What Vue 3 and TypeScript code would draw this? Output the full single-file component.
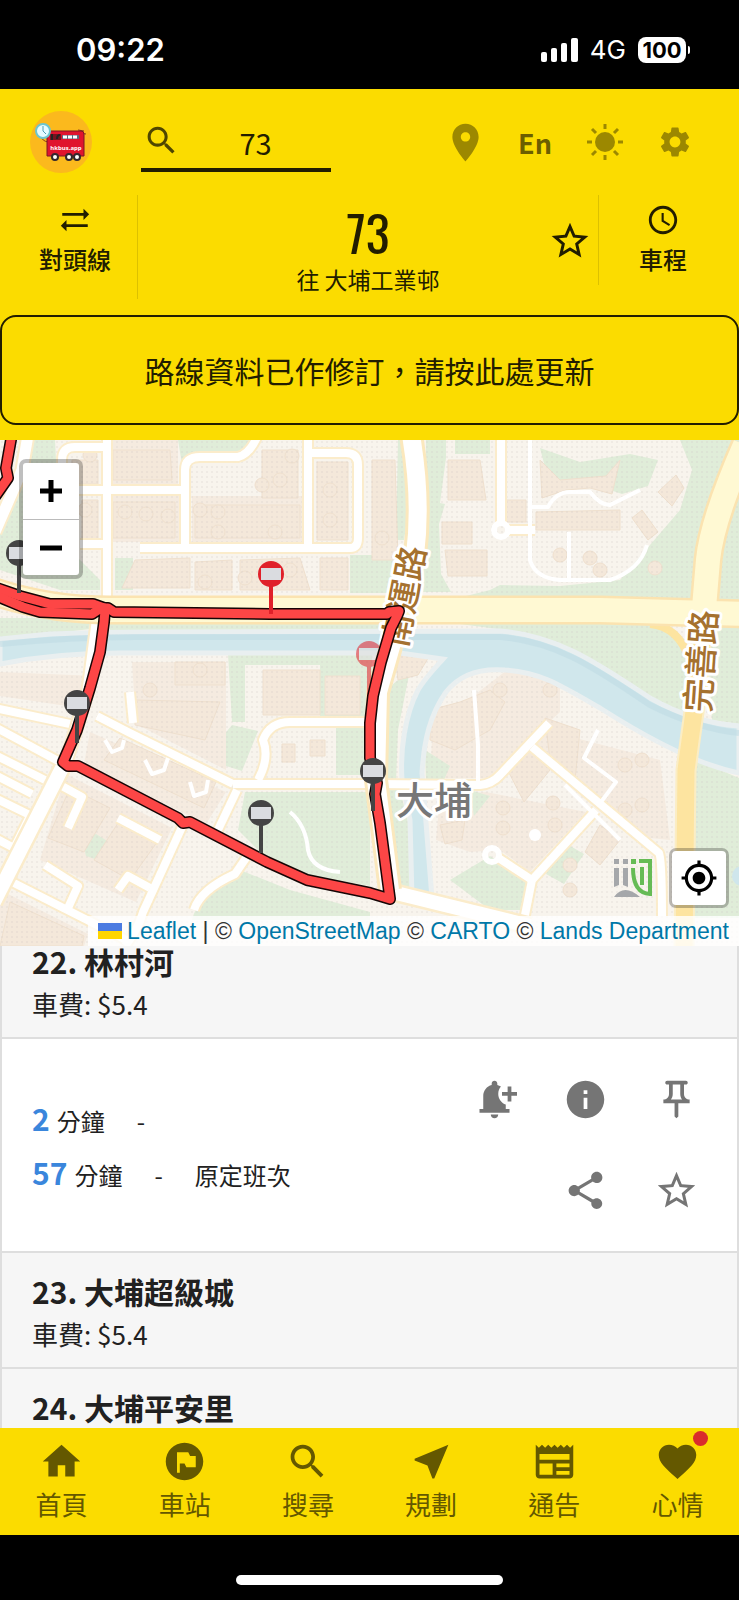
<script setup lang="ts">
import { onMounted, ref } from 'vue'

interface NavItem {
  label: string
  icon: string
  badge?: boolean
}

interface Pin {
  x: number
  y: number
  color: string
}

const icons = {
  search:
    'M15.5 14h-.79l-.28-.27C15.41 12.59 16 11.11 16 9.5 16 5.91 13.09 3 9.5 3S3 5.91 3 9.5 5.91 16 9.5 16c1.61 0 3.09-.59 4.23-1.57l.27.28v.79l5 4.99L20.49 19l-4.99-5zm-6 0C7.01 14 5 11.99 5 9.5S7.01 5 9.5 5 14 7.01 14 9.5 11.99 14 9.5 14z',
  place:
    'M12 2C8.13 2 5 5.13 5 9c0 5.25 7 13 7 13s7-7.75 7-13c0-3.87-3.13-7-7-7zm0 9.5c-1.38 0-2.5-1.12-2.5-2.5s1.12-2.5 2.5-2.5 2.5 1.12 2.5 2.5-1.12 2.5-2.5 2.5z',
  settings:
    'M19.14 12.94c.04-.3.06-.61.06-.94 0-.32-.02-.64-.07-.94l2.03-1.58c.18-.14.23-.41.12-.61l-1.92-3.32c-.12-.22-.37-.29-.59-.22l-2.39.96c-.5-.38-1.03-.7-1.62-.94l-.36-2.54c-.04-.24-.24-.41-.48-.41h-3.84c-.24 0-.43.17-.47.41l-.36 2.54c-.59.24-1.13.57-1.62.94l-2.39-.96c-.22-.08-.47 0-.59.22L2.74 8.87c-.12.21-.08.47.12.61l2.03 1.58c-.05.3-.09.63-.09.94s.02.64.07.94l-2.03 1.58c-.18.14-.23.41-.12.61l1.92 3.32c.12.22.37.29.59.22l2.39-.96c.5.38 1.03.7 1.62.94l.36 2.54c.05.24.24.41.48.41h3.84c.24 0 .44-.17.47-.41l.36-2.54c.59-.24 1.13-.56 1.62-.94l2.39.96c.22.08.47 0 .59-.22l1.92-3.32c.12-.22.07-.47-.12-.61l-2.01-1.58zM12 15.6c-1.98 0-3.6-1.62-3.6-3.6s1.62-3.6 3.6-3.6 3.6 1.62 3.6 3.6-1.62 3.6-3.6 3.6z',
  swap: 'M22 8l-4-4v3H3v2h15v3l4-4zM2 16l4 4v-3h15v-2H6v-3l-4 4z',
  clock:
    'M11.99 2C6.47 2 2 6.48 2 12s4.47 10 9.99 10C17.52 22 22 17.52 22 12S17.52 2 11.99 2zM12 20c-4.42 0-8-3.58-8-8s3.58-8 8-8 8 3.58 8 8-3.58 8-8 8zm.5-13H11v6l5.25 3.15.75-1.23-4.5-2.67z',
  star:
    'M22 9.24l-7.19-.62L12 2 9.19 8.63 2 9.24l5.46 4.73L5.82 21 12 17.27 18.18 21l-1.63-7.03L22 9.24zM12 15.4l-3.76 2.27 1-4.28-3.32-2.88 4.38-.38L12 6.1l1.71 4.04 4.38.38-3.32 2.88 1 4.28L12 15.4z',
  locate:
    'M12 8c-2.21 0-4 1.79-4 4s1.79 4 4 4 4-1.79 4-4-1.79-4-4-4zm8.94 3c-.46-4.17-3.77-7.48-7.94-7.94V1h-2v2.06C6.83 3.52 3.52 6.83 3.06 11H1v2h2.06c.46 4.17 3.77 7.48 7.94 7.94V23h2v-2.06c4.17-.46 7.48-3.77 7.94-7.94H23v-2h-2.06zM12 19c-3.87 0-7-3.13-7-7s3.13-7 7-7 7 3.13 7 7-3.13 7-7 7z',
  bell:
    'M10 20h4c0 1.1-.9 2-2 2s-2-.9-2-2zm4-11c0 2.61 1.67 4.83 4 5.66V17h2v2H4v-2h2v-7c0-2.79 1.91-5.14 4.5-5.8v-.7c0-.83.67-1.5 1.5-1.5s1.5.67 1.5 1.5v.7c.71.18 1.36.49 1.95.9C14.54 6.14 14 7.51 14 9zm10-1h-3V5h-2v3h-3v2h3v3h2v-3h3V8z',
  info: 'M12 2C6.48 2 2 6.48 2 12s4.48 10 10 10 10-4.48 10-10S17.52 2 12 2zm1 15h-2v-6h2v6zm0-8h-2V7h2v2z',
  pin:
    'M14 4v5c0 1.12.37 2.16 1 3H9c.65-.86 1-1.9 1-3V4h4m3-2H7c-.55 0-1 .45-1 1s.45 1 1 1h1v5c0 1.66-1.34 3-3 3v2h5.97v7l1 1 1-1v-7H19v-2c-1.66 0-3-1.34-3-3V4h1c.55 0 1-.45 1-1s-.45-1-1-1z',
  share:
    'M18 16.08c-.76 0-1.44.3-1.96.77L8.91 12.7c.05-.23.09-.46.09-.7s-.04-.47-.09-.7l7.05-4.11c.54.5 1.25.81 2.04.81 1.66 0 3-1.34 3-3s-1.34-3-3-3-3 1.34-3 3c0 .24.04.47.09.7L8.04 9.81C7.5 9.31 6.79 9 6 9c-1.66 0-3 1.34-3 3s1.34 3 3 3c.79 0 1.5-.31 2.04-.81l7.12 4.16c-.05.21-.08.43-.08.65 0 1.61 1.31 2.92 2.92 2.92s2.92-1.31 2.92-2.92-1.31-2.92-2.92-2.92z',
  home: 'M10 20v-6h4v6h5v-8h3L12 3 2 12h3v8z',
  flag: 'M12 2C6.48 2 2 6.48 2 12s4.48 10 10 10 10-4.48 10-10S17.52 2 12 2zm6 13h-5l-1-2H9.5v5H8V7h6l1 2h3v6z',
  near: 'M21 3L3 10.53v.98l6.84 2.65L12.48 21h.98L21 3z',
  news:
    'M22 3l-1.67 1.67L18.67 3 17 4.67 15.33 3l-1.66 1.67L12 3l-1.67 1.67L8.67 3 7 4.67 5.33 3 3.67 4.67 2 3v16c0 1.1.9 2 2 2h16c1.1 0 2-.9 2-2V3zM11 19H4v-6h7v6zm9 0h-7v-2h7v2zm0-4h-7v-2h7v2zm0-4H4V8h16v3z',
  heart:
    'M12 21.35l-1.45-1.32C5.4 15.36 2 12.28 2 8.5 2 5.42 4.42 3 7.5 3c1.74 0 3.41.81 4.5 2.09C13.09 3.81 14.76 3 16.5 3 19.58 3 22 5.42 22 8.5c0 3.78-3.4 6.86-8.55 11.54L12 21.35z',
}

const query = ref('73')

const nav: NavItem[] = [
  { label: '首頁', icon: icons.home },
  { label: '車站', icon: icons.flag },
  { label: '搜尋', icon: icons.search },
  { label: '規劃', icon: icons.near },
  { label: '通告', icon: icons.news },
  { label: '心情', icon: icons.heart, badge: true },
]

const actions = [
  { label: '到站提示', icon: icons.bell },
  { label: '車站資料', icon: icons.info },
  { label: '置頂', icon: icons.pin },
]
const moreActions = [
  { label: '分享', icon: icons.share },
  { label: '收藏', icon: icons.star },
]

const arrivals = [
  { minutes: 2, remark: '' },
  { minutes: 57, remark: '原定班次' },
]

const pins: Pin[] = [
  { x: 19, y: 113, color: '#444' },
  { x: 271, y: 134, color: '#e0202a' },
  { x: 77, y: 263, color: '#444' },
  { x: 373, y: 331, color: '#444' },
  { x: 261, y: 373, color: '#444' },
]

const routeLines = [
  'M12 -6 L6 28 L8 38 L-6 58',
  'M-6 147 L20 156 L50 164 L93 164 L107 169',
  'M-6 155 L23 167 L40 172 L92 174 L101 168 L108 168 L114 172 L270 174 L387 174 L389 172 L399 171 L397 176 L391 188 L381 222 L373 256 L370 283 L370 318 L377 343 L375 354 L380 383 L390 459 L370 453 L307 440 L267 422 L190 382 L183 383 L178 378 L78 326 L68 326 L63 322 L77 290 L90 248 L100 212 L104 182 L105 170',
]

const roadsMinor = [
  'M62 40 V20 Q62 7 75 7 H104',
  'M75 50 H185',
  'M107 -5 V165',
  'M185 108 V30 Q185 17 200 17 H238 Q250 14 258 -5',
  'M140 108 H350 Q358 108 358 98 V25 Q358 13 346 13 H308',
  'M308 -5 V108',
  'M80 104 H105',
  'M501 -5 V86 M505 90 H535',
  'M-5 268 L70 284 M97 276 L128 292 L233 344',
  'M233 344 H375 L480 345 Q492 344 500 335 L549 283',
  'M-5 287 L60 322',
  'M-5 315 L45 340 M-5 335 L32 354',
  'M182 387 L143 472 Q138 490 125 506',
  'M8 440 L97 485 L130 502',
  'M237 350 L217 392',
  'M130 252 L133 283',
  'M258 340 Q270 318 263 300 Q270 282 290 282 H370',
  'M532 307 L659 413 Q662 418 662 476',
  'M596 370 L532 440 L524 480',
  'M532 440 L497 417',
  'M-5 358 L40 380 M-5 398 L14 408 L32 372',
  'M60 345 L82 357 L68 388 M118 378 L160 400',
  'M45 425 L78 446 L68 468 M118 450 L128 436 L150 448',
  'M194 470 Q200 450 235 434 L246 418',
]
const paths = [
  'M530 -5 V120 Q535 138 560 140 H610 Q640 130 647 105',
  'M530 67 H548 Q556 52 570 52 H590 Q600 65 610 65 L640 50',
  'M569 92 V138',
  'M290 372 Q306 385 308 410 Q312 430 340 432',
  'M478 345 V305 L474 250 M565 345 L620 400',
  'M598 290 L584 318 L616 342 L598 366',
  'M105 300 L112 312 L122 308 L124 300 M145 320 L152 334 L164 330 L168 318 M190 342 L194 356 L206 352 L208 340',
]

const estates = [
  '112,0 178,0 178,44 112,44',
  '192,56 302,56 302,102 192,102',
  '112,56 180,56 180,102 112,102',
  '90,292 226,352 206,384 84,324',
  '66,334 172,388 136,462 40,420',
  '0,450 88,494 84,506 0,506',
  '0,232 96,236 80,268 0,256',
  '132,222 226,222 226,330 136,284',
  '455,270 520,220 560,245 560,272 490,338 430,338 432,300',
  '545,290 660,320 670,400 650,398 536,306',
  '440,355 486,352 586,372 530,432 500,410 470,412 436,400',
]

const blocks = [
  '113,10 170,10 172,40 113,40',
  '113,62 175,62 175,98 113,98',
  '195,65 300,65 300,98 195,98',
  '262,10 298,10 298,58 262,58',
  '317,22 348,22 348,100 317,100',
  '72,20 98,20 98,44 72,44',
  '82,60 98,60 98,100 82,100',
  '135,120 190,118 190,148 122,148',
  '195,122 232,120 232,150 195,150',
  '240,120 300,118 310,150 240,150',
  '320,118 348,118 348,150 320,150',
  '372,20 395,20 398,120 372,120',
  '448,20 480,20 486,60 448,60',
  '442,82 472,82 472,104 442,104',
  '445,110 487,110 487,136 448,136',
  '506,60 526,60 526,82 506,82',
  '536,72 620,70 620,90 536,90',
  '540,20 560,40 606,36 620,20 612,54 590,48 566,50 542,58',
  '632,78 642,70 658,92 648,100',
  '658,52 676,35 684,48 672,66',
  '175,222 225,222 225,245 175,245',
  '263,230 320,230 320,275 263,275',
  '325,236 360,236 360,275 325,275',
  '135,260 220,262 205,300 135,285',
  '120,298 216,342 204,368 104,320',
  '70,348 110,368 84,412 48,398',
  '120,380 160,398 130,440 94,420',
  '10,462 84,496 82,506 0,506',
  '282,304 295,304 295,322 282,322',
  '310,300 325,300 325,316 310,316',
  '505,325 530,312 550,330 524,362',
  '545,278 580,290 575,340 550,320',
  '585,412 600,385 620,400 600,425',
  '430,270 460,262 490,250 505,262 490,290 455,310 430,300',
  '395,215 430,215 418,235 398,240',
  '440,385 465,380 462,400 445,404',
]

const towers: [number, number][] = [
  [125, 72], [146, 74], [168, 76], [200, 70], [218, 72], [218, 92], [275, 92], [292, 16],
  [262, 45], [330, 80], [330, 50], [382, 98], [200, 230], [205, 142], [245, 138], [290, 130],
  [503, 368], [503, 388], [553, 363], [555, 385], [625, 370], [642, 365], [625, 325], [642, 320],
  [90, 15], [85, 70], [150, 250], [280, 40], [560, 115], [590, 118], [600, 130], [655, 128],
  [570, 425], [570, 450], [550, 250], [500, 250],
]

const list = ref<HTMLElement | null>(null)
onMounted(() => {
  if (list.value) list.value.scrollTop = 23
})
</script>

<template>
  <div class="phone">
    <div class="status">
      <span class="time">09:22</span>
      <div class="signal-group">
        <svg class="bars" viewBox="0 0 37 24" aria-hidden="true">
          <rect x="0" y="14" width="6" height="10" rx="2" />
          <rect x="10" y="10" width="6" height="14" rx="2" />
          <rect x="20" y="5" width="6" height="19" rx="2" />
          <rect x="30" y="0" width="7" height="24" rx="2" />
        </svg>
        <span class="net">4G</span>
        <span class="battery">100</span>
      </div>
    </div>

    <header class="header">
      <div class="toolbar">
        <a class="logo" href="#" aria-label="hkbus.app">
          <svg viewBox="0 0 62 62">
            <circle cx="31" cy="31" r="31" fill="#fbb91d" />
            <path d="M11 25q1 5 7 6" fill="none" stroke="#8a3b1c" stroke-width="1" />
            <path d="M48 19l6 1M50 22l6 1" stroke="#8a3b1c" stroke-width="1" />
            <path d="M21 20h30q3 0 3 3v22H17V24q0-4 4-4z" fill="#e0142e" stroke="#7a1626" stroke-width="1" />
            <rect x="20" y="23" width="11" height="6" fill="#75131f" />
            <path d="M22 23v6M27 28q0-4 3-4" stroke="#222" stroke-width="2" fill="none" />
            <rect x="32" y="24" width="17" height="4" fill="#5d6b80" />
            <path d="M33 26h4M38 26h4M43 26h4" stroke="#fff" stroke-width="3" />
            <text x="36" y="39" text-anchor="middle" class="logo-text">hkbus.app</text>
            <g fill="#fff" stroke="#33272e" stroke-width="2">
              <circle cx="25" cy="46" r="3" />
              <circle cx="39" cy="46" r="3" />
              <circle cx="47" cy="46" r="3" />
            </g>
            <circle cx="13" cy="20" r="7" fill="#e6fbff" stroke="#6cc5cf" stroke-width="2" />
            <path d="M13 15v5l3 3" fill="none" stroke="#4f9fb5" stroke-width="1" />
          </svg>
        </a>
        <label class="search">
          <svg class="i37" viewBox="0 0 24 24"><path :d="icons.search" /></svg>
          <input v-model="query" type="text" aria-label="路線" />
        </label>
        <div class="tools">
          <button type="button" aria-label="定位" class="tool dim">
            <svg class="i45" viewBox="0 0 24 24"><path :d="icons.place" /></svg>
          </button>
          <button type="button" class="tool lang">En</button>
          <button type="button" aria-label="外觀" class="tool dim">
            <svg class="i36" viewBox="0 0 36 36">
              <circle cx="18" cy="18" r="10" />
              <g stroke="currentColor" stroke-width="3">
                <path d="M18 0v5M18 31v5M0 18h5M31 18h5M5 5l4 4M27 27l4 4M5 31l4-4M27 9l4-4" />
              </g>
            </svg>
          </button>
          <button type="button" aria-label="設定" class="tool dim">
            <svg class="i36" viewBox="0 0 24 24"><path :d="icons.settings" /></svg>
          </button>
        </div>
      </div>

      <div class="route">
        <button type="button" class="side">
          <svg class="i34" viewBox="0 0 24 24"><path :d="icons.swap" /></svg>
          <span>對頭線</span>
        </button>
        <div class="route-main">
          <div class="route-title">
            <h1>73</h1>
            <p>往 大埔工業邨</p>
          </div>
          <button type="button" class="fav" aria-label="收藏路線">
            <svg class="i44" viewBox="0 0 24 24"><path :d="icons.star" /></svg>
          </button>
        </div>
        <button type="button" class="side right">
          <svg class="i34" viewBox="0 0 24 24"><path :d="icons.clock" /></svg>
          <span>車程</span>
        </button>
      </div>

      <button type="button" class="notice">路線資料已作修訂，請按此處更新</button>
    </header>

    <section class="map" aria-label="地圖">
      <svg class="tiles" viewBox="0 0 739 506" preserveAspectRatio="xMidYMid slice">
        <defs>
          <pattern id="speck" width="5" height="5" patternUnits="userSpaceOnUse">
            <circle cx="2" cy="2" r="1" fill="#cfc8c4" opacity=".3" />
          </pattern>
        </defs>
        <rect width="739" height="506" fill="#f8f4ed" />

        <g class="green">
          <path d="M0 75 L22 30 L30 0 L55 0 L60 100 L100 140 L100 150 L60 150 L0 130z" />
          <path d="M178 0H256L240 14H200L182 24z" />
          <path d="M246 78h22v22h-22z" />
          <path d="M350 115h55v38h-55zM115 118h18v32h-18z" />
          <path d="M398 0l8 0 4 60-6 40-8 0zM426 0h20v18l-6 45-14 20zM455 0h35v14h-35z" />
          <path d="M425 60l20 4-6 20 2 50 10 18h-28z" />
          <path d="M500 145 L560 146 L620 140 L650 105 L680 70 L692 30 L680 0 H739 V160 H450 L490 150z" />
          <path d="M540 8l40 14 50-8 28 6-10 26-26 8-30-10-40 10z" />
          <path d="M460 184H660L686 200V275L650 258L590 222L520 192z" />
          <path d="M706 184H739V284L712 280z" />
          <path d="M0 178H98V188L0 200z" />
          <path d="M110 180H385V190H110z" />
          <path d="M228 214H372V282H320V225H245V282H232z" />
          <path d="M232 285l26 6-16 40-38-12z" />
          <path d="M245 352H370V446L310 436L260 412L238 390z" />
          <path d="M336 284H370V335H336z" />
          <path d="M240 430l50 20 80 22v8H192q4-22 48-50z" />
          <path d="M386 250l24-20-12 60-2 52h-10zM386 350h14l10 40v60l-14-6z" />
          <path d="M692 318l47 20v140h-47z" />
          <path d="M450 440l40-24 38 24-8 30-30 0z" />
        </g>
        <g class="estate"><polygon v-for="e in estates" :key="e" :points="e" /></g>
        <g class="green">
          <path d="M82 398l14-4 16 10-8 18-18-6z" />
          <path d="M425 310l25 16-6 14-18 0zM470 350l20 6-16 20zM560 400l24 14-20 30-18-10z" />
        </g>

        <g class="block">
          <polygon v-for="b in blocks" :key="b" :points="b" />
          <circle v-for="(t, i) in towers" :key="i" :cx="t[0]" :cy="t[1]" r="7" />
        </g>
        <rect width="739" height="506" fill="url(#speck)" />

        <path
          class="water"
          d="M0 199 L50 194 Q100 192 150 192 L500 191 C560 196 600 225 650 258 C680 275 710 284 739 286 V333 C700 325 650 300 600 268 C560 245 540 232 505 230 C480 228 460 234 446 252 C430 275 424 300 422 333 L425 370 L432 458 H412 L410 380 L402 340 C400 310 405 275 418 250 C425 238 435 228 443 219 L400 213 H130 Q60 212 0 224z"
        />
        <path
          class="water-deep"
          d="M0 204 Q80 196 150 197 H500 C560 202 600 232 650 265 C680 280 710 290 739 293"
        />
        <circle cx="742" cy="436" r="10" fill="#cfe6ec" />

        <g class="lines">
          <path v-for="r in roadsMinor" :key="'c' + r" :d="r" class="casing" />
          <path v-for="p in paths" :key="p" :d="p" class="footway" />
          <path v-for="r in roadsMinor" :key="'r' + r" :d="r" class="road" />
          <path class="casing wide" d="M62 328 L-6 462" />
          <path class="road wide" d="M62 328 L-6 462" />
          <path class="casing wide" d="M392 452 L530 486" />
          <path class="road wide" d="M392 452 L530 486" />
          <path class="casing side-way" d="M28 -5 L22 30 L-5 92 M98 176 L88 250 L66 322" />
          <path class="road side-way" d="M28 -5 L22 30 L-5 92 M98 176 L88 250 L66 322" />
          <circle cx="501" cy="90" r="7" class="road-ring" />
          <circle cx="492" cy="415" r="7" class="road-ring" />
          <circle cx="535" cy="395" r="6" class="spot" />
          <path class="arterial-case" d="M411 -5 Q422 60 415 115 L400 175 L378 252 L376 340 L390 450" />
          <path class="arterial" d="M411 -5 Q422 60 415 115 L400 175 L378 252 L376 340 L390 450" />
          <path class="orange-thin" d="M650 184 Q678 186 690 220" />
          <path class="trunk-case" d="M-5 152 Q50 170 110 170 H600 L745 174 M745 5 Q712 80 708 120 L703 180" />
          <path class="orange-case" d="M703 182 L697 250 L686 330 L684 510" />
          <path class="trunk" d="M-5 152 Q50 170 110 170 H600 L745 174 M745 5 Q712 80 708 120 L703 180" />
          <path class="orange" d="M703 190 L697 250 L686 330 L684 510" />
        </g>

        <g class="map-label">
          <text x="434" y="374" class="town">大埔</text>
          <text transform="translate(402 156) rotate(-79)" class="street">南運路</text>
          <text transform="translate(699 221) rotate(-86)" class="street">完善路</text>
        </g>

        <g opacity=".55">
          <path d="M369 214V256" stroke="#e0202a" stroke-width="4" />
          <circle cx="369" cy="214" r="13" fill="#e0202a" />
          <rect x="359" y="208" width="20" height="12" fill="#ddd" />
        </g>
        <g class="line-edge"><path v-for="l in routeLines" :key="l" :d="l" /></g>
        <g class="line-fill"><path v-for="l in routeLines" :key="l" :d="l" /></g>
        <g v-for="p in pins" :key="p.x">
          <path :d="`M${p.x} ${p.y}v40`" :stroke="p.color" stroke-width="4" />
          <circle :cx="p.x" :cy="p.y" r="13" :fill="p.color" />
          <rect :x="p.x - 10" :y="p.y - 6" width="20" height="12" fill="#dadce0" />
        </g>
      </svg>

      <div class="zoom">
        <button type="button" aria-label="放大">
          <svg viewBox="0 0 24 24"><path d="M1 12h22M12 1v22" /></svg>
        </button>
        <button type="button" aria-label="縮小">
          <svg viewBox="0 0 24 24"><path d="M1 12h22" /></svg>
        </button>
      </div>

      <div class="map-tools">
        <svg class="lands" viewBox="0 0 38 38" aria-hidden="true">
          <path d="M0 0h5v5H0zM9 0h5v5H9zM0 9h5v17l-5 2zM9 9h5v19l-5-2zM0 38q10-14 26 0z" fill="#a5a7aa" />
          <path d="M17 0h5v5h-5z" fill="#66bb55" />
          <path d="M25 2h11v33Q19 34 19 9" fill="none" stroke="#66bb55" stroke-width="4" />
          <path d="M28 8v18" fill="none" stroke="#66bb55" stroke-width="4" />
        </svg>
        <button type="button" class="locate" aria-label="我的位置">
          <svg viewBox="0 0 24 24"><path :d="icons.locate" /></svg>
        </button>
      </div>

      <div class="attribution">
        <svg class="ua" viewBox="0 0 24 16" aria-hidden="true">
          <path fill="#4c7be1" d="M0 0h24v8H0z" />
          <path fill="#ffd500" d="M0 8h24v8H0z" />
        </svg>
        <a href="#">Leaflet</a> | © <a href="#">OpenStreetMap</a> © <a href="#">CARTO</a> ©
        <a href="#">Lands Department</a>
      </div>
    </section>

    <main ref="list" class="stops">
      <section class="stop">
        <h2>22. 林村河</h2>
        <p>車費: $5.4</p>
      </section>
      <section class="detail">
        <ul class="eta">
          <li v-for="a in arrivals" :key="a.minutes">
            <b>{{ a.minutes }}</b>
            <span>分鐘</span>
            <span class="dash">-</span>
            <span>{{ a.remark }}</span>
          </li>
        </ul>
        <div class="actions">
          <div class="action-row">
            <button v-for="a in actions" :key="a.label" type="button" :aria-label="a.label">
              <svg class="i45" viewBox="0 0 24 24"><path :d="a.icon" /></svg>
            </button>
          </div>
          <div class="action-row">
            <button v-for="a in moreActions" :key="a.label" type="button" :aria-label="a.label">
              <svg class="i45" viewBox="0 0 24 24"><path :d="a.icon" /></svg>
            </button>
          </div>
        </div>
      </section>
      <section class="stop">
        <h2>23. 大埔超級城</h2>
        <p>車費: $5.4</p>
      </section>
      <section class="stop">
        <h2>24. 大埔平安里</h2>
        <p>車費: $5.4</p>
      </section>
    </main>

    <nav class="bottom">
      <a v-for="n in nav" :key="n.label" href="#">
        <span class="nav-icon">
          <svg class="i45" viewBox="0 0 24 24"><path :d="n.icon" /></svg>
          <i v-if="n.badge" class="badge"></i>
        </span>
        <span>{{ n.label }}</span>
      </a>
    </nav>
    <div class="home-area"><div class="home-bar"></div></div>
  </div>
</template>

<style>
body {
  margin: 0;
  background: #000;
}
</style>

<style scoped>
.phone {
  display: flex;
  flex-direction: column;
  height: 100vh;
  font-family: 'Noto Sans CJK TC', 'Noto Sans', sans-serif;
  color: #212121;
  background: #000;
}
* {
  box-sizing: border-box;
}
button {
  margin: 0;
  padding: 0;
  border: 0;
  background: none;
  color: inherit;
  font: inherit;
  display: flex;
  align-items: center;
  justify-content: center;
}
a {
  text-decoration: none;
}
svg {
  display: block;
  fill: currentColor;
}
.i34 { width: 34px; height: 34px; }
.i36 { width: 36px; height: 36px; }
.i37 { width: 37px; height: 37px; }
.i44 { width: 44px; height: 44px; }
.i45 { width: 45px; height: 45px; }

.status {
  flex: none;
  display: flex;
  align-items: center;
  justify-content: space-between;
  height: 89px;
  padding: 10px 50px 0 76px;
  color: #fff;
  font-family: Inter, sans-serif;
}
.time {
  font-size: 31px;
  font-weight: 600;
}
.signal-group {
  display: flex;
  align-items: center;
  gap: 12px;
}
.bars {
  width: 37px;
  height: 24px;
}
.net {
  font-size: 26px;
}
.battery {
  position: relative;
  width: 48px;
  height: 26px;
  margin-right: 3px;
  border-radius: 8px;
  background: #fff;
  color: #000;
  font-size: 22px;
  font-weight: 700;
  line-height: 26px;
  text-align: center;
}
.battery::after {
  content: '';
  position: absolute;
  left: 50px;
  top: 9px;
  width: 2px;
  height: 8px;
  border-radius: 0 2px 2px 0;
  background: #fff;
}

.header {
  flex: none;
  background: #fbdc00;
  color: #221d00;
  padding-bottom: 15px;
}
.toolbar {
  display: flex;
  align-items: center;
  height: 106px;
  padding: 0 29px 0 30px;
}
.logo {
  width: 62px;
}
.logo-text {
  font: 700 6px 'Open Sans', sans-serif;
  fill: #fff;
}
.search {
  display: flex;
  align-items: center;
  width: 190px;
  height: 60px;
  margin-left: 49px;
  padding-left: 2px;
  border-bottom: 4px solid #221d00;
  color: #4f4600;
}
.search input {
  flex: 1;
  min-width: 0;
  height: 56px;
  padding: 4px 0 0;
  border: 0;
  outline: 0;
  background: none;
  color: #221d00;
  font: 29px 'Noto Sans CJK TC', sans-serif;
  text-align: center;
}
.tools {
  display: flex;
  flex: 1;
  justify-content: flex-end;
}
.tool {
  width: 70px;
  height: 60px;
}
.dim {
  color: #9c8800;
}
.lang {
  color: #6c5e00;
  font-size: 27px;
  font-weight: 700;
}

.route {
  display: grid;
  grid-template-columns: 137px 1fr 141px;
  align-items: start;
  height: 120px;
}
.side {
  flex-direction: column;
  justify-content: flex-start;
  gap: 6px;
  width: 100%;
  height: 90px;
  padding: 8px 0 0 13px;
  font-size: 24px;
  font-weight: 500;
  line-height: 32px;
}
.side.right {
  padding: 8px 12px 0 0;
  border-left: 1px solid #dcc100;
}
.route-main {
  display: grid;
  grid-template-columns: 1fr auto 1fr;
  height: 104px;
  border-left: 1px solid #dcc100;
}
.route-title {
  grid-column: 2;
  text-align: center;
}
.route-title h1 {
  margin: 6px 0 0;
  font-family: Oswald, 'Roboto Condensed', 'Liberation Sans Narrow', Roboto, sans-serif;
  font-size: 50px;
  font-weight: 400;
  line-height: 60px;
}
.route-title p {
  margin: 0;
  font-size: 23px;
  line-height: 36px;
}
.fav {
  justify-self: end;
  height: 92px;
  padding-right: 6px;
}
.notice {
  width: 100%;
  height: 110px;
  border: 2px solid #221d00;
  border-radius: 16px;
  font-size: 30px;
}

.map {
  flex: none;
  position: relative;
  height: 506px;
  overflow: hidden;
  background: #f8f3ec;
}
.tiles {
  width: 100%;
  height: 100%;
}
.green { fill: #e0edd9; }
.estate { fill: #f5ebe0; }
.block { fill: #f4e8da; stroke: #efe0ce; stroke-width: 1; }
.water { fill: #d0e7ec; stroke: #e9eff0; stroke-width: 5; }
.water-deep { fill: none; stroke: #bfdce4; stroke-width: 6; opacity: .6; }
.lines path, .lines circle { fill: none; stroke-linejoin: round; }
.lines .spot { fill: #fff; }
.casing { stroke: #fbeccb; stroke-width: 12; }
.road { stroke: #fff; stroke-width: 8; }
.road-ring { stroke: #fff; stroke-width: 6; }
.casing.wide { stroke-width: 19; }
.road.wide { stroke-width: 14; }
.casing.side-way { stroke-width: 15; }
.road.side-way { stroke-width: 11; }
.footway { stroke: #fff; stroke-width: 4; }
.arterial-case { stroke: #fbe8bd; stroke-width: 24; }
.arterial { stroke: #fff; stroke-width: 18; }
.trunk-case { stroke: #fbe3b0; stroke-width: 29; }
.trunk { stroke: #fff9d3; stroke-width: 24; }
.orange-case { stroke: #fbedc4; stroke-width: 21; }
.orange { stroke: #fde4a0; stroke-width: 17; }
.orange-thin { stroke: #fde4a0; stroke-width: 8; }
.map-label {
  font-family: 'Noto Sans CJK TC', sans-serif;
  text-anchor: middle;
  paint-order: stroke;
  stroke: #fff;
  stroke-width: 6;
  stroke-linejoin: round;
}
.town {
  fill: #777;
  font-size: 38px;
  font-weight: 500;
}
.street {
  fill: #a5712f;
  font-size: 34px;
  font-weight: 500;
  dominant-baseline: central;
}
.line-edge path, .line-fill path {
  fill: none;
  stroke-linejoin: round;
  stroke-linecap: round;
}
.line-edge path { stroke: #160505; stroke-width: 12; }
.line-fill path { stroke: #fd4646; stroke-width: 9; }

.zoom {
  position: absolute;
  left: 19px;
  top: 19px;
  border: 4px solid rgba(0, 0, 0, .25);
  border-radius: 7px;
  background: #fff;
  background-clip: padding-box;
}
.zoom button {
  width: 56px;
  height: 56px;
  color: #000;
}
.zoom button + button {
  border-top: 1px solid #bbb;
}
.zoom svg {
  width: 24px;
  height: 24px;
  stroke: #000;
  stroke-width: 5;
}
.map-tools {
  position: absolute;
  right: 10px;
  bottom: 38px;
  display: flex;
  align-items: center;
  gap: 17px;
}
.lands {
  width: 38px;
  height: 38px;
}
.locate {
  width: 60px;
  height: 60px;
  border: 3px solid rgba(0, 0, 0, .25);
  border-radius: 7px;
  background: #fff;
  background-clip: padding-box;
  color: #000;
}
.locate svg {
  width: 38px;
  height: 38px;
}
.attribution {
  position: absolute;
  right: 0;
  bottom: 0;
  height: 30px;
  padding: 0 10px;
  background: rgba(255, 255, 255, .8);
  color: #333;
  font: 23px/30px 'Liberation Sans', Arial, sans-serif;
  white-space: nowrap;
}
.attribution a {
  color: #0078a8;
}
.ua {
  display: inline-block;
  width: 24px;
  height: 16px;
  margin-right: 5px;
}

.stops {
  flex: 1;
  min-height: 0;
  overflow-y: auto;
  scrollbar-width: none;
  border: 0 solid #dedede;
  border-width: 0 2px;
  background: #f6f6f6;
}
.stop {
  height: 116px;
  padding: 16px 30px 0;
  border-bottom: 2px solid #dedede;
}
.stop h2 {
  margin: 0;
  font-size: 30px;
  font-weight: 700;
  line-height: 44px;
}
.stop p {
  margin: 0;
  font-size: 26px;
  line-height: 42px;
}
.detail {
  display: flex;
  align-items: center;
  justify-content: space-between;
  height: 214px;
  padding: 0 15px 0 30px;
  border-bottom: 2px solid #dedede;
  background: #fff;
}
.eta {
  margin: 0;
  padding: 0;
  list-style: none;
  font-size: 24px;
}
.eta li {
  display: flex;
  align-items: baseline;
  height: 54px;
  line-height: 54px;
}
.eta b {
  margin-right: 7px;
  color: #3a86dc;
  font-size: 30px;
}
.dash {
  margin: 0 32px;
}
.actions {
  color: #757575;
}
.action-row {
  display: flex;
  justify-content: flex-end;
}
.action-row button {
  width: 91px;
  height: 91px;
}

.bottom {
  flex: none;
  display: grid;
  grid-template-columns: repeat(6, 1fr);
  height: 107px;
  padding-top: 11px;
  background: #fbdc00;
}
.bottom a {
  display: flex;
  flex-direction: column;
  align-items: center;
  gap: 3px;
  color: #645800;
  font-size: 26px;
  line-height: 34px;
}
.nav-icon {
  position: relative;
}
.badge {
  position: absolute;
  right: -8px;
  top: -8px;
  width: 15px;
  height: 15px;
  border-radius: 50%;
  background: #d92c2c;
}
.home-area {
  flex: none;
  display: flex;
  justify-content: center;
  height: 65px;
  padding-top: 40px;
}
.home-bar {
  width: 36%;
  height: 10px;
  border-radius: 5px;
  background: #fff;
}
</style>
